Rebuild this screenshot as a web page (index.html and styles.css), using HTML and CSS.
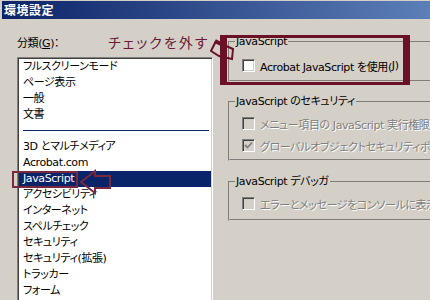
FILE: index.html
```html
<!DOCTYPE html>
<html lang="ja">

<head>
    <meta charset="UTF-8">
    <title>環境設定</title>
    <link rel="stylesheet" href="styles.css">
</head>

<body>
    <div class="window">
        <div class="titlebar">環境設定</div>
        <div class="content">
            <div class="categories">
                <div class="cat-label">分類(<u>G</u>)：</div>
                <ul class="list">
                    <li>フルスクリーンモード</li>
                    <li>ページ表示</li>
                    <li>一般</li>
                    <li>文書</li>
                    <li class="sep"></li>
                    <li>3D とマルチメディア</li>
                    <li>Acrobat.com</li>
                    <li class="selected">JavaScript</li>
                    <li>アクセシビリティ</li>
                    <li>インターネット</li>
                    <li>スペルチェック</li>
                    <li>セキュリティ</li>
                    <li>セキュリティ(拡張)</li>
                    <li>トラッカー</li>
                    <li>フォーム</li>
                </ul>
            </div>
            <div class="panel">
                <fieldset class="group g-enable">
                    <legend>JavaScript</legend>
                    <div class="check"><span class="box"></span>Acrobat JavaScript を使用(<u>J</u>)</div>
                </fieldset>
                <fieldset class="group g-security">
                    <legend>JavaScript のセキュリティ</legend>
                    <div class="check disabled"><span class="box"></span>メニュー項目の JavaScript 実行権限を有効にする</div>
                    <div class="check disabled"><span class="box">
                        <svg viewBox="0 0 9 9" width="9" height="9"><path d="M1 4 L3.5 6.5 L8 1.5" fill="none" stroke="#808080" stroke-width="1.8"/></svg>
                    </span>グローバルオブジェクトセキュリティポリシーを有効にする</div>
                </fieldset>
                <fieldset class="group g-debug">
                    <legend>JavaScript デバッガ</legend>
                    <div class="check disabled"><span class="box"></span>エラーとメッセージをコンソールに表示(S)</div>
                </fieldset>
            </div>
        </div>

        <!-- annotations drawn over the dialog -->
        <div class="note">チェックを外す</div>
        <svg class="pointer" width="30" height="26" viewBox="0 0 30 26">
            <path d="M8 3 L3 13 L11 18 L24 21 L25 11 L18 8 L14 6" fill="none" stroke="#6a1128" stroke-width="2"/>
            <path d="M7 3 L13 6" stroke="#6a1128" stroke-width="4"/>
        </svg>
        <div class="mark mark-group"></div>
        <div class="mark mark-item"></div>
        <svg class="arrow" width="36" height="28" viewBox="0 0 36 28">
            <path d="M3 14 L17 3 L17 8 L32 8 L32 20 L17 20 L17 25 Z" fill="none" stroke="#7a2840" stroke-width="2"/>
        </svg>
    </div>
</body>

</html>
```

FILE: styles.css
```css
body {
    margin: 0;
    background: #d4d0c8;
    font-family: "DejaVu Sans", "Noto Sans CJK JP", sans-serif;
    font-feature-settings: "palt";
    font-size: 11px;
    letter-spacing: -0.4px;
    color: #000;
}

.window {
    position: relative;
    width: 430px;
    height: 300px;
    overflow: hidden;
}

.titlebar {
    margin: 1px 0 0 2px;
    height: 18px;
    line-height: 18px;
    padding-left: 2px;
    background: linear-gradient(90deg, #0c2368, #5c7fb8);
    color: #fff;
    font-family: "Noto Sans CJK JP", sans-serif;
    font-size: 12px;
    font-weight: bold;
    letter-spacing: 0.5px;
}

.content {
    display: flex;
    padding-top: 16px;
}

.categories {
    width: 196px;
    margin-left: 17px;
    flex-shrink: 0;
}

.cat-label {
    line-height: 16px;
    padding-top: 1px;
}

.list {
    list-style: none;
    margin: 5px 0 0;
    padding: 1px 0 0;
    height: 260px;
    background: #fff;
    border: 1px solid;
    border-color: #808080 #fff #fff #808080;
    box-shadow: inset 1px 1px #404040, inset -1px -1px #d4d0c8;
}

.list li {
    height: 16px;
    line-height: 16px;
    padding-left: 4px;
    margin: 0 1px;
    white-space: nowrap;
}

.list .sep {
    box-sizing: border-box;
    padding-top: 7px;
}

.list .sep::after {
    content: "";
    display: block;
    margin: 0 2px 0 0;
    border-top: 1px solid #0a246a;
}

.list .selected {
    background: #0a246a;
    color: #fff;
}

.panel {
    width: 260px;
    margin-left: 15px;
    flex-shrink: 0;
}

.group {
    margin: 0;
    padding: 10px 0 8px 12px;
    border: 2px groove #d4d0c8;
    border-right: none;
    min-width: 0;
}

.group legend {
    margin-left: -7px;
    padding: 0 1px;
    line-height: 14px;
}

.g-security {
    margin-top: 13px;
    padding: 8px 0 7px 12px;
}

.g-debug {
    margin-top: 14px;
    padding: 8px 0 9px 12px;
}

.check {
    display: flex;
    align-items: center;
    height: 13px;
    white-space: nowrap;
}

.check + .check {
    margin-top: 9px;
}

.box {
    display: flex;
    align-items: center;
    justify-content: center;
    box-sizing: border-box;
    width: 13px;
    height: 13px;
    margin-right: 5px;
    flex-shrink: 0;
    background: #fff;
    border: 1px solid;
    border-color: #808080 #fff #fff #808080;
    box-shadow: inset 1px 1px #404040, inset -1px -1px #d4d0c8;
}

.disabled {
    color: #808080;
    text-shadow: 1px 1px #fff;
}

.disabled .box {
    background: #d4d0c8;
}

/* annotations */
.note {
    position: absolute;
    left: 108px;
    top: 33px;
    font-family: "Noto Sans CJK JP", sans-serif;
    font-size: 14px;
    line-height: 18px;
    letter-spacing: 2px;
    color: #6a1a36;
}

.pointer {
    position: absolute;
    left: 208px;
    top: 38px;
}

.mark {
    position: absolute;
    box-sizing: border-box;
}

.mark-group {
    left: 220px;
    top: 35px;
    width: 190px;
    height: 50px;
    border: 3px solid #6a1128;
    border-left-width: 7px;
    border-right-width: 7px;
}

.mark-item {
    left: 12px;
    top: 171px;
    width: 66px;
    height: 17px;
    border: 2px solid #7a2840;
}

.arrow {
    position: absolute;
    left: 78px;
    top: 168px;
}
```
